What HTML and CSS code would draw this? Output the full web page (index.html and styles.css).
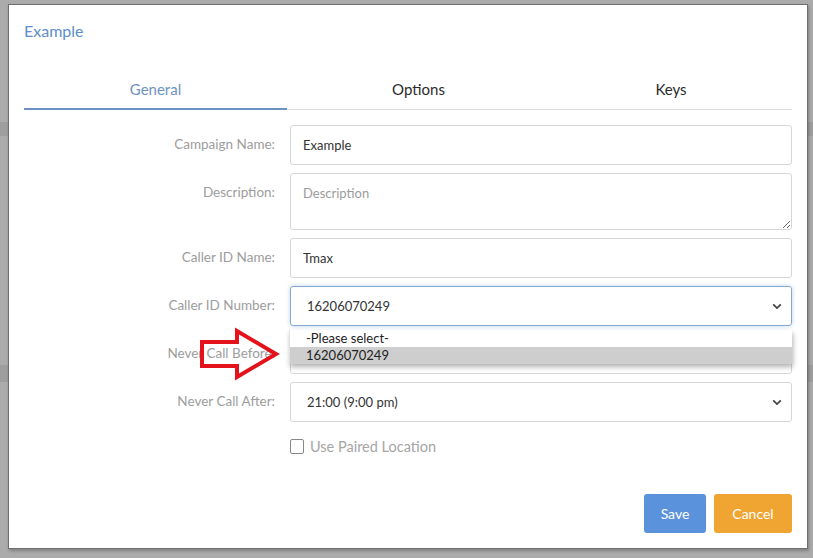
FILE: index.html
```html
<!DOCTYPE html>
<html lang="en">
<head>
<meta charset="utf-8">
<title>Example</title>
<link rel="stylesheet" href="styles.css">
</head>
<body>
<div class="modal">
  <div class="modal-title">Example</div>
  <div class="tabs">
    <div class="tab active">General</div>
    <div class="tab">Options</div>
    <div class="tab last">Keys</div>
  </div>
  <div class="form">
    <div class="row">
      <label class="label">Campaign Name:</label>
      <div class="field"><input class="input" type="text" value="Example"></div>
    </div>
    <div class="row">
      <label class="label">Description:</label>
      <div class="field"><textarea class="input textarea" placeholder="Description"></textarea></div>
    </div>
    <div class="row">
      <label class="label">Caller ID Name:</label>
      <div class="field"><input class="input" type="text" value="Tmax"></div>
    </div>
    <div class="row">
      <label class="label">Caller ID Number:</label>
      <div class="field dd-host">
        <div class="select focused"><span>16206070249</span>
          <svg class="chev" width="10" height="7" viewBox="0 0 10 7"><path d="M1.2 1.3 L5 5.1 L8.8 1.3" fill="none" stroke="#444" stroke-width="1.8"/></svg>
        </div>
        <div class="dropdown">
          <div class="opt">-Please select-</div>
          <div class="opt sel">16206070249</div>
        </div>
      </div>
    </div>
    <div class="row">
      <label class="label">Never Call Before:</label>
      <div class="field">
        <div class="select"><span>09:00 (9:00 am)</span>
          <svg class="chev" width="10" height="7" viewBox="0 0 10 7"><path d="M1.2 1.3 L5 5.1 L8.8 1.3" fill="none" stroke="#444" stroke-width="1.8"/></svg>
        </div>
      </div>
    </div>
    <div class="row">
      <label class="label">Never Call After:</label>
      <div class="field">
        <div class="select"><span>21:00 (9:00 pm)</span>
          <svg class="chev" width="10" height="7" viewBox="0 0 10 7"><path d="M1.2 1.3 L5 5.1 L8.8 1.3" fill="none" stroke="#444" stroke-width="1.8"/></svg>
        </div>
      </div>
    </div>
    <div class="row check-row">
      <div class="label"></div>
      <label class="check"><span class="box"></span>Use Paired Location</label>
    </div>
  </div>
  <div class="footer">
    <button class="btn save">Save</button>
    <button class="btn cancel">Cancel</button>
  </div>
  <svg class="arrow" width="90" height="60" viewBox="0 0 90 60">
    <polygon points="5,15 40,15 40,4 79,27 40,50 40,39 5,39" fill="none" stroke="#e3121b" stroke-width="4" stroke-linejoin="miter"/>
  </svg>
</div>
</body>
</html>
```

FILE: styles.css
```css
* { box-sizing: border-box; }
html, body { margin: 0; padding: 0; }
body {
  width: 813px;
  height: 558px;
  overflow: hidden;
  padding: 4px 0 0 8px;
  font-family: Lato, "Open Sans", sans-serif;
  background:
    linear-gradient(#9e9e9e, #9e9e9e) 0 122px / 100% 14px no-repeat,
    linear-gradient(#9e9e9e, #9e9e9e) 0 365px / 100% 17px no-repeat,
    #ababab;
}
.modal {
  position: relative;
  width: 800px;
  height: 545px;
  background: #fff;
  border: 1px solid #6f6f6f;
  box-shadow: 1px 2px 3px rgba(0,0,0,.25);
  padding: 0 15px 0 15px;
  display: flex;
  flex-direction: column;
}
.modal-title {
  color: #5d8fc9;
  font-size: 16px;
  line-height: 20px;
  padding-top: 16px;
  height: 57px;
}
.tabs {
  display: flex;
  border-bottom: 1px solid #dcdcdc;
  height: 48px;
}
.tab {
  width: 263px;
  text-align: center;
  font-size: 15px;
  color: #2a2a2a;
  padding-top: 18px;
}
.tab.last { flex: 1; width: auto; }
.tab.active {
  color: #6e93bd;
  border-bottom: 2px solid #6a93c2;
  margin-bottom: -1px;
}
.form {
  margin-top: 15px;
  display: flex;
  flex-direction: column;
  gap: 8px;
}
.row {
  display: flex;
  gap: 15px;
  align-items: flex-start;
}
.label {
  width: 251px;
  flex: none;
  text-align: right;
  font-size: 13.5px;
  line-height: 39px;
  color: #9d9d9d;
}
.field { flex: 1; position: relative; }
.input {
  display: block;
  width: 100%;
  height: 40px;
  border: 1px solid #d6d6d6;
  border-radius: 3px;
  padding: 0 12px;
  font-family: inherit;
  font-size: 13px;
  color: #333;
  background: #fff;
  outline: none;
}
.textarea {
  height: 57px;
  padding-top: 11px;
  resize: vertical;
}
.textarea::placeholder { color: #9b9b9b; }
.select {
  height: 40px;
  border: 1px solid #d6d6d6;
  border-radius: 3px;
  padding: 0 9px 0 16px;
  display: flex;
  align-items: center;
  justify-content: space-between;
  font-size: 13px;
  color: #333;
}
.select.focused {
  border-color: #86a9cf;
  box-shadow: 0 0 4px rgba(102,150,210,.45);
}
.chev { flex: none; }
.dropdown {
  position: absolute;
  left: -1px;
  right: 0;
  top: 44px;
  background: #fff;
  box-shadow: 1px 3px 5px rgba(0,0,0,.3);
  border-left: 1px solid #e2e2e2;
  z-index: 2;
  font-size: 13px;
  color: #222;
}
.opt {
  height: 17px;
  line-height: 17px;
  padding-left: 16px;
}
.opt.sel { background: #cecece; }
.check-row { margin-top: 9px; }
.check {
  display: flex;
  align-items: center;
  gap: 6px;
  font-size: 14.5px;
  color: #a5a5a5;
  height: 30px;
  margin-top: -8px;
}
.box {
  width: 14px;
  height: 15px;
  border: 1px solid #888;
  border-radius: 2px;
  background: #fff;
}
.footer {
  margin-top: auto;
  margin-bottom: 15px;
  display: flex;
  justify-content: flex-end;
  gap: 8px;
}
.btn {
  height: 39px;
  border: none;
  border-radius: 3px;
  color: #fff;
  font-family: inherit;
  font-size: 14px;
  padding: 0;
}
.save { width: 62px; background: #5a93dc; }
.cancel { width: 78px; background: #f0a431; }
.arrow {
  position: absolute;
  left: 188px;
  top: 322px;
  z-index: 3;
}
```
